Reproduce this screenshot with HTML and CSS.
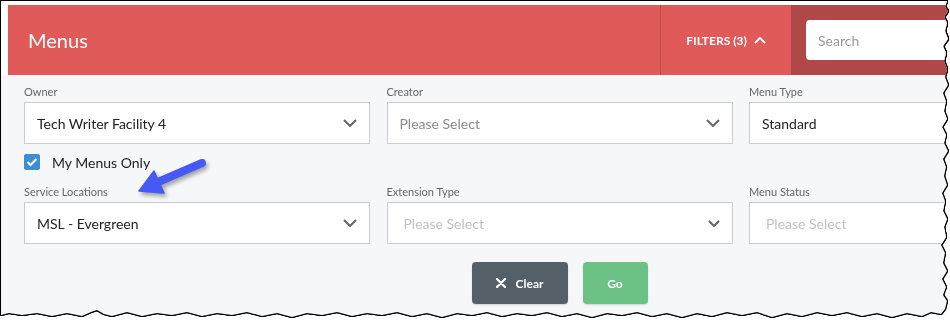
FILE: index.html
```html
<!DOCTYPE html>
<html lang="en">
<head>
  <meta charset="UTF-8" />
  <meta name="viewport" content="width=device-width, initial-scale=1.0" />
  <title>Menus</title>
  <link rel="stylesheet" href="styles.css">
</head>
<body>
  <div class="shot">
    <div class="page">
      <div class="top">
        <header class="topbar">
          <h1 class="title">Menus</h1>
          <button class="filters-toggle">FILTERS (3)
            <svg width="12" height="8" viewBox="0 0 12 8"><polyline points="1,7 6,2 11,7" fill="none" stroke="#fff" stroke-width="1.8"/></svg>
          </button>
          <div class="search-area">
            <input class="search" type="text" placeholder="Search">
          </div>
        </header>
      </div>

      <section class="filters">
        <div class="filter-grid">
          <div class="field">
            <div class="label">Owner</div>
            <div class="select">
              <span>Tech Writer Facility 4</span>
              <svg class="chev" width="14" height="8" viewBox="0 0 14 8"><polyline points="1,1 7,7 13,1"/></svg>
            </div>
          </div>
          <div class="field">
            <div class="label">Creator</div>
            <div class="select placeholder">
              <span>Please Select</span>
              <svg class="chev" width="14" height="8" viewBox="0 0 14 8"><polyline points="1,1 7,7 13,1"/></svg>
            </div>
          </div>
          <div class="field">
            <div class="label">Menu Type</div>
            <div class="select">
              <span>Standard</span>
              <svg class="chev" width="14" height="8" viewBox="0 0 14 8"><polyline points="1,1 7,7 13,1"/></svg>
            </div>
          </div>

          <label class="check">
            <span class="box">
              <svg width="12" height="10" viewBox="0 0 12 10"><polyline points="1.5,5 4.5,8 10.5,2" fill="none" stroke="#fff" stroke-width="2"/></svg>
            </span>
            My Menus Only
          </label>

          <div class="field">
            <div class="label">Service Locations</div>
            <div class="select">
              <span>MSL - Evergreen</span>
              <svg class="chev" width="14" height="8" viewBox="0 0 14 8"><polyline points="1,1 7,7 13,1"/></svg>
            </div>
          </div>
          <div class="field">
            <div class="label">Extension Type</div>
            <div class="select disabled">
              <span>Please Select</span>
              <svg class="chev" width="12" height="7" viewBox="0 0 12 7"><polyline points="1,1 6,6 11,1"/></svg>
            </div>
          </div>
          <div class="field">
            <div class="label">Menu Status</div>
            <div class="select disabled">
              <span>Please Select</span>
              <svg class="chev" width="12" height="7" viewBox="0 0 12 7"><polyline points="1,1 6,6 11,1"/></svg>
            </div>
          </div>
        </div>

        <div class="actions">
          <button class="btn btn-clear">
            <svg width="10" height="10" viewBox="0 0 10 10"><path d="M1 1 L9 9 M9 1 L1 9" stroke="#fff" stroke-width="2.2" stroke-linecap="round"/></svg>
            Clear
          </button>
          <button class="btn btn-go">Go</button>
        </div>
      </section>

      <!-- callout arrow drawn on top of the screenshot -->
      <svg class="arrow" width="90" height="50" viewBox="130 150 90 50">
        <line x1="202" y1="163" x2="158" y2="182" stroke="#4659f4" stroke-width="8" stroke-linecap="round"/>
        <polygon points="139,191 154,171 164,193" fill="#4659f4" stroke="#4659f4" stroke-width="1.5" stroke-linejoin="round"/>
      </svg>
    </div>
  </div>
</body>
</html>
```

FILE: styles.css
```css
body {
  margin: 0;
  background: #fff;
  font-family: Lato, "Open Sans", sans-serif;
}
.shot {
  padding: 1px;
  width: 949px;
  filter: drop-shadow(1px 0 0 #000) drop-shadow(-1px 0 0 #000) drop-shadow(0 1px 0 #000) drop-shadow(0 -1px 0 #000);
}
.page {
  position: relative;
  width: 949px;
  height: 319px;
  overflow: hidden;
  background: #f6f7f9;
  clip-path: polygon(0 0, 946px 0, 944px 6px, 947px 10px, 943px 16px, 946px 22px, 944px 30px, 947px 38px, 942px 45px, 945px 52px, 943px 60px, 946px 68px, 944px 76px, 947px 84px, 942px 92px, 945px 100px, 943px 110px, 946px 118px, 941px 126px, 945px 134px, 943px 142px, 947px 150px, 942px 158px, 945px 166px, 943px 175px, 946px 184px, 941px 192px, 944px 200px, 942px 210px, 946px 218px, 943px 226px, 945px 236px, 940px 244px, 944px 252px, 942px 262px, 946px 270px, 941px 278px, 945px 286px, 942px 294px, 946px 300px, 944px 308px, 940px 313px, 930px 311px, 921px 315px, 906px 312px, 891px 316px, 876px 312px, 861px 315px, 846px 311px, 831px 314px, 816px 311px, 801px 315px, 786px 312px, 771px 316px, 756px 311px, 741px 314px, 726px 311px, 711px 315px, 696px 312px, 681px 316px, 666px 312px, 651px 315px, 636px 311px, 621px 314px, 606px 312px, 591px 316px, 576px 312px, 561px 315px, 546px 311px, 531px 314px, 516px 312px, 501px 315px, 486px 311px, 471px 314px, 456px 312px, 441px 316px, 426px 312px, 411px 315px, 396px 311px, 381px 314px, 366px 312px, 351px 315px, 336px 311px, 321px 314px, 306px 312px, 291px 316px, 276px 312px, 261px 315px, 246px 311px, 231px 314px, 216px 312px, 201px 315px, 186px 311px, 171px 314px, 156px 312px, 141px 315px, 126px 311px, 111px 315px, 103px 313px, 96px 309px, 90px 311px, 81px 315px, 66px 312px, 51px 315px, 36px 312px, 21px 314px, 8px 312px, 0 314px);
}

/* header */
.top {
  background: #fff;
  padding: 4px 0 0 7px;
}
.topbar {
  display: flex;
  width: 1200px;
  height: 70px;
  background: #e05a5a;
}
.title {
  flex: 0 0 632px;
  margin: 0;
  padding-left: 20px;
  font-size: 20px;
  font-weight: 400;
  line-height: 70px;
  color: #fff;
}
.filters-toggle {
  flex: 0 0 131px;
  display: flex;
  align-items: center;
  justify-content: center;
  gap: 7px;
  border: none;
  border-left: 1px solid #c14b4b;
  background: transparent;
  color: #fff;
  font-family: Lato, sans-serif;
  font-size: 12px;
  font-weight: 700;
  padding: 0;
}
.search-area {
  flex: 1;
  background: #b04848;
  padding: 15px;
}
.search {
  width: 220px;
  height: 40px;
  box-sizing: border-box;
  border: none;
  border-radius: 4px;
  padding: 0 12px;
  font-family: Lato, sans-serif;
  font-size: 14px;
}
.search::placeholder {
  color: #9a9a9a;
}

/* filter panel */
.filters {
  padding: 9px 0 0 23px;
}
.filter-grid {
  display: grid;
  grid-template-columns: repeat(3, 346px);
  column-gap: 16.5px;
  width: 1071px;
}
.label {
  height: 16px;
  margin-bottom: 2px;
  font-size: 11px;
  line-height: 16px;
  color: #666;
}
.select {
  display: flex;
  align-items: center;
  justify-content: space-between;
  height: 42px;
  box-sizing: border-box;
  padding: 0 12px;
  border: 1px solid #ccc;
  background: #fff;
  font-size: 14px;
  color: #222;
}
.select.placeholder {
  color: #8a8a8a;
}
.select.disabled {
  padding-left: 16px;
  color: #c2c2c2;
}
.chev polyline {
  fill: none;
  stroke: #666;
  stroke-width: 2;
}
.check {
  grid-column: 1 / -1;
  display: flex;
  align-items: center;
  gap: 12px;
  height: 16px;
  margin: 10px 0 14px;
  font-size: 14px;
  color: #222;
}
.box {
  display: flex;
  align-items: center;
  justify-content: center;
  width: 16px;
  height: 16px;
  border-radius: 2px;
  background: #3d8ed3;
}

/* buttons */
.actions {
  display: flex;
  justify-content: center;
  gap: 15px;
  width: 1071px;
  margin-top: 18px;
}
.btn {
  display: flex;
  align-items: center;
  justify-content: center;
  gap: 10px;
  height: 42px;
  border: none;
  border-radius: 4px;
  color: #fff;
  font-family: Lato, sans-serif;
  font-size: 12px;
  font-weight: 700;
  box-shadow: 0 1px 2px rgba(0,0,0,0.15);
}
.btn-clear {
  width: 96px;
  background: #555f67;
}
.btn-go {
  width: 65px;
  background: #6cc285;
}

.arrow {
  position: absolute;
  left: 129px;
  top: 149px;
  filter: drop-shadow(2px 3px 2px rgba(0,0,0,0.35));
}
```
